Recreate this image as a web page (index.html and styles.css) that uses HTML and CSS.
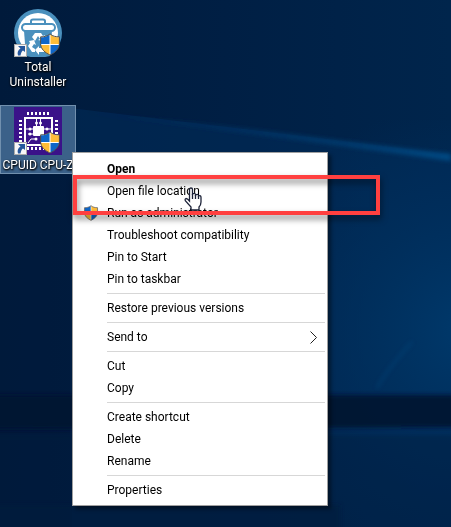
FILE: index.html
```html
<!DOCTYPE html>
<html lang="en">

<head>
    <meta charset="UTF-8">
    <meta name="viewport" content="width=device-width, initial-scale=1.0">
    <title>Desktop</title>
    <link rel="stylesheet" href="styles.css">
</head>

<body>
    <!-- Wallpaper -->
    <svg class="wallpaper" viewBox="0 0 451 527" preserveAspectRatio="none" aria-hidden="true">
        <defs>
            <linearGradient id="sky" x1="0" y1="0" x2="1" y2="0">
                <stop offset="0" stop-color="#001a3b"/>
                <stop offset="0.5" stop-color="#001f44"/>
                <stop offset="1" stop-color="#00254c"/>
            </linearGradient>
            <radialGradient id="glow" gradientUnits="userSpaceOnUse" cx="470" cy="330" r="230">
                <stop offset="0" stop-color="#003e72" stop-opacity="0.8"/>
                <stop offset="0.5" stop-color="#003464" stop-opacity="0.5"/>
                <stop offset="1" stop-color="#003060" stop-opacity="0"/>
            </radialGradient>
            <linearGradient id="ray" x1="0" y1="0" x2="1" y2="0">
                <stop offset="0" stop-color="#00316a" stop-opacity="0"/>
                <stop offset="0.6" stop-color="#003c70" stop-opacity="0.7"/>
                <stop offset="1" stop-color="#064a84"/>
            </linearGradient>
            <filter id="soft" x="-20%" y="-50%" width="140%" height="200%">
                <feGaussianBlur stdDeviation="2"/>
            </filter>
        </defs>
        <rect width="451" height="527" fill="url(#sky)"/>
        <path d="M70 108 L451 154 V527 H70 Z" fill="#002c58" opacity="0.6"/>
        <rect y="120" width="451" height="407" fill="url(#glow)"/>
        <path d="M70 111 Q200 122 290 134 T451 154 V161 Q380 151 290 139 T70 111 Z" fill="url(#ray)" filter="url(#soft)"/>
        <path d="M0 170 H72 V527 H0 Z" fill="#001a3c" opacity="0.5"/>
        <path d="M377 388 Q388 368 412 342" fill="none" stroke="#0a4a80" stroke-width="2" opacity="0.5" filter="url(#soft)"/>
        <path d="M-10 395 L470 395 V427 L-10 429 Z" fill="#001632" opacity="0.95" filter="url(#soft)"/>
        <path d="M-10 435 H470 V540 H-10 Z" fill="#001b3e" opacity="0.4" filter="url(#soft)"/>
        <path d="M-10 505 H340 V540 H-10 Z" fill="#001b3e" opacity="0.6" filter="url(#soft)"/>
    </svg>

    <svg class="symbols" aria-hidden="true">
        <symbol id="shield" viewBox="0 0 22 24">
            <path d="M11 1 C8 3.500 5 4 1.500 4 V11 C1.500 17 6 20.500 11 23 C16 20.500 20.500 17 20.500 11 V4 C17 4 14 3.500 11 1 Z" fill="#fff"/>
            <path d="M10.500 1.500 C8 3.500 5 4.500 1.500 4.500 V11.500 H10.500 Z" fill="#0f66c8"/>
            <path d="M11.500 1.500 C14 3.500 17 4.500 20.500 4.500 V11.500 H11.500 Z" fill="#ffbd38"/>
            <path d="M1.500 12.500 H10.500 V22.700 C5.500 20.500 2 17 1.500 12.500 Z" fill="#ffbd38"/>
            <path d="M11.500 12.500 H20.500 C20 17 16.500 20.500 11.500 22.700 Z" fill="#0f66c8"/>
            <path d="M11 1 C8 3.500 5 4 1.200 4 V11 C1.200 17 6 20.500 11 23 C16 20.500 20.800 17 20.800 11 V4 C17 4 14 3.500 11 1 Z" fill="none" stroke="#4d4a45" stroke-width="1"/>
        </symbol>
        <symbol id="shortcut" viewBox="0 0 13 13">
            <rect width="13" height="13" fill="#aaa"/>
            <rect x="1" y="1" width="11" height="11" fill="#f7f7f7"/>
            <path d="M4 2 H11 V8 L9 6.500 C7.500 7.500 7 9 6.500 11.500 H4 C3 8.500 4 6 6.500 4.500 Z" fill="#24569d"/>
        </symbol>
    </svg>

    <main class="desktop">
        <a class="shortcut" href="#">
            <svg class="shortcut-icon" viewBox="0 0 48 48" aria-hidden="true">
                <circle cx="24" cy="24" r="24" fill="#4a90bd"/>
                <circle cx="24" cy="24" r="20" fill="#fff"/>
                <path d="M10 22 H38 L36 47 C29 49 19 49 12 47 Z" fill="#4a90bd"/>
                <path d="M17 14 V12 Q17 10.500 19 10.500 H29 Q31 10.500 31 12 V14" fill="none" stroke="#4a90bd" stroke-width="2"/>
                <rect x="8" y="15" width="33" height="7" rx="3.500" fill="#fff" stroke="#4a90bd" stroke-width="2"/>
                <path d="M18 28 L21 24 H27 L29 27 L31 26 L29 32 L24 31 L26 30 L24 27 L21 32 Z M15 32 L20 31 L22 36 L20 35 L18 38 L21 40 V43 H18 L14 37 L16 34 Z M25 37 V39 H31 V43 H25 V46 L21 41 Z" fill="#fff"/>
                <use href="#shortcut" x="0" y="35" width="13" height="13"/>
                <use href="#shield" x="25" y="24" width="22" height="23"/>
            </svg>
            <span class="shortcut-label">Total Uninstaller</span>
        </a>
        <a class="shortcut selected" href="#">
            <svg class="shortcut-icon" viewBox="0 0 48 48" aria-hidden="true">
                <rect width="48" height="48" fill="#3a1289"/>
                <path d="M13 6.500 H36 M13 41.500 H36" stroke="#fff" stroke-width="3" stroke-dasharray="2 2"/>
                <path d="M6.500 13 V36 M42.500 13 V36" stroke="#fff" stroke-width="3" stroke-dasharray="2 2"/>
                <rect x="11" y="11" width="27" height="27" fill="none" stroke="#fff" stroke-width="2"/>
                <rect x="19" y="19" width="11" height="10" rx="1" fill="#fff"/>
                <path d="M22.500 19 V12 M26.500 19 V12 M19 22 H12 M30 22 H37 M19 27 H14 M21 32 H17 L14 36" fill="none" stroke="#fff" stroke-width="1"/>
                <g fill="#fff">
                    <circle cx="22.500" cy="16" r="1.500"/>
                    <circle cx="26.500" cy="16" r="1.500"/>
                    <circle cx="16" cy="22" r="1.500"/>
                    <circle cx="16" cy="27" r="1.500"/>
                    <circle cx="33" cy="22" r="1.500"/>
                    <circle cx="22" cy="32" r="1.500"/>
                </g>
                <use href="#shortcut" x="0" y="35" width="13" height="13"/>
                <use href="#shield" x="25" y="24" width="22" height="23"/>
            </svg>
            <span class="shortcut-label">CPUID CPU-Z</span>
        </a>
    </main>

    <!-- Context menu -->
    <div class="menu">
        <button class="item default">Open</button>
        <button class="item">Open file location</button>
        <button class="item">
            <svg class="item-icon" aria-hidden="true"><use href="#shield"/></svg>Run as administrator
        </button>
        <button class="item">Troubleshoot compatibility</button>
        <button class="item">Pin to Start</button>
        <button class="item">Pin to taskbar</button>
        <hr>
        <button class="item">Restore previous versions</button>
        <hr>
        <button class="item">Send to
            <svg class="item-arrow" viewBox="0 0 7 13" aria-hidden="true">
                <path d="M0.500 0.500 L6.500 6.500 L0.500 12.500" fill="none" stroke="#222" stroke-width="1"/>
            </svg>
        </button>
        <hr>
        <button class="item">Cut</button>
        <button class="item">Copy</button>
        <hr>
        <button class="item">Create shortcut</button>
        <button class="item">Delete</button>
        <button class="item">Rename</button>
        <hr>
        <button class="item">Properties</button>
    </div>

    <!-- Pointer and highlight -->
    <svg class="pointer" viewBox="0 0 18 24" aria-hidden="true">
        <path d="M5.500 13.500 V2.500 Q5.500 1 7 1 Q8.500 1 8.500 2.500 V7 Q11.500 5.500 11.500 8 Q14.500 6.500 14.500 9 Q17 8 17 10.500 V15 Q17 18 15 20 V23 H7 V20 L1.500 14 Q0.500 12 2 11.500 Q3.500 11.500 5.500 14 Z" fill="#fff" stroke="#1c2238" stroke-width="1.300"/>
        <path d="M8.500 7 V12 M11.500 8 V12 M14.500 9 V12" stroke="#1c2238" stroke-width="1.300"/>
    </svg>
    <div class="highlight"></div>
</body>

</html>
```
FILE: styles.css
```css
* {
    box-sizing: border-box;
}

body {
    margin: 0;
    min-height: 100vh;
    font-family: Roboto, "Segoe UI", sans-serif;
    font-size: 12px;
    background-color: #00204a;
    overflow: hidden;
}

.wallpaper {
    position: fixed;
    top: 0;
    left: 0;
    width: 100%;
    height: 100%;
    z-index: -1;
}

.symbols {
    position: absolute;
    width: 0;
    height: 0;
}

.desktop {
    display: flex;
    flex-direction: column;
    align-items: flex-start;
    gap: 14px;
    padding-top: 7px;
}

.shortcut {
    display: flex;
    flex-direction: column;
    align-items: center;
    gap: 3px;
    width: 76px;
    padding-top: 1px;
    border: 1px solid transparent;
    color: #fff;
    text-decoration: none;
    text-align: center;
    line-height: 15px;
    text-shadow: 1px 1px 2px #000, 0 1px 2px #000;
}

.shortcut.selected {
    background-color: #3b6189;
    border-color: #7190ae;
}

.shortcut-icon {
    width: 48px;
    height: 48px;
}

.selected .shortcut-label {
    white-space: nowrap;
}

.menu {
    position: absolute;
    top: 152px;
    left: 72px;
    width: 256px;
    padding: 5px 2px 4px;
    background-color: #fff;
    border: 1px solid #a0a0a0;
    box-shadow: 3px 3px 4px rgba(0, 0, 0, 0.45);
}

.menu hr {
    height: 1px;
    margin: 3px 0 3px 32px;
    border: 0;
    background-color: #d7d7d7;
}

.item {
    position: relative;
    display: flex;
    align-items: center;
    width: 100%;
    height: 22px;
    padding: 0 8px 0 32px;
    border: 0;
    background: none;
    color: #000;
    font: inherit;
    text-align: left;
}

.item.default {
    font-weight: bold;
}

.item-icon {
    position: absolute;
    left: 8px;
    width: 16px;
    height: 16px;
}

.item-arrow {
    width: 7px;
    height: 13px;
    margin-left: auto;
}

.pointer {
    position: absolute;
    top: 187px;
    left: 184px;
    width: 18px;
    height: 24px;
}

.highlight {
    position: absolute;
    top: 175px;
    left: 73px;
    width: 307px;
    height: 40px;
    border: 4px solid #ff4040;
    filter: drop-shadow(1px 4px 3px rgba(0, 0, 0, 0.5));
    pointer-events: none;
}
```
